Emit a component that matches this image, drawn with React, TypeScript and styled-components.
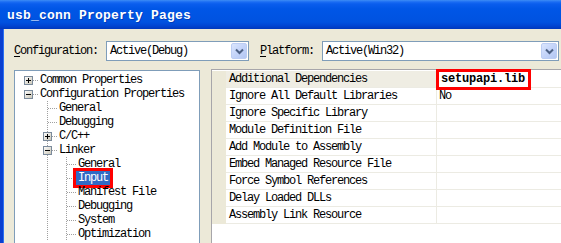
import { FC } from "react";
import styled, { createGlobalStyle } from "styled-components";

const GlobalStyle = createGlobalStyle`
  html, body {
    margin: 0;
    padding: 0;
    background: #ffffff;
  }

  body {
    font-family: "Liberation Mono", "Courier New", monospace;
  }
`;

const colors = {
  face: "#ECE9D8",
  inputBorder: "#7F9DB9",
  gridBorder: "#A7A6AA",
  gridLine: "#ECEBE3",
  selection: "#316AC5",
  mark: "#FF0000",
  dots: "#A0A0A0",
};

const textFont = `
  font-size: 12px;
  letter-spacing: -1.2px;
`;

const Window = styled.div`
  display: flex;
  flex-direction: column;
  width: 561px;
  height: 243px;
  overflow: hidden;
  background-color: ${colors.face};
`;

const TitleBar = styled.div`
  display: flex;
  align-items: center;
  flex-shrink: 0;
  height: 29px;
  padding: 1px 0 0 7px;
  box-sizing: border-box;
  background: linear-gradient(
    to bottom,
    #3d8df5 0px,
    #1a6cf3 2px,
    #0a5ded 4px,
    #0056e6 9px,
    #0054e3 16px,
    #0052e0 22px,
    #0048d6 25px,
    #003cc4 28px,
    #0038ba 29px
  );

  .title {
    color: #ffffff;
    font-weight: bold;
    font-size: 13px;
    letter-spacing: 0.2px;
    text-shadow: 1px 1px 0 rgba(0, 20, 110, 0.35);
  }
`;

const Body = styled.div`
  display: flex;
  flex-direction: column;
  flex: 1;
  gap: 8px;
  padding: 12px 0 0 11px;
  border-left: 3px solid #0a3fd0;
  box-shadow: inset 1px 0 0 #2b70f2;
`;

const ConfigRow = styled.div`
  display: flex;
  align-items: center;
  height: 20px;
`;

interface ILabel {
  $width: number;
  $gap?: number;
}

const FieldLabel = styled.label<ILabel>`
  width: ${(p) => p.$width}px;
  margin-left: ${(p) => p.$gap ?? 0}px;
  ${textFont}
  color: #000000;

  u {
    text-decoration: underline;
    text-underline-offset: 2px;
  }
`;

const Combo = styled.div<{ $width: number }>`
  display: flex;
  align-items: center;
  width: ${(p) => p.$width}px;
  height: 20px;
  box-sizing: border-box;
  border: 1px solid ${colors.inputBorder};
  background-color: #ffffff;

  .value {
    flex: 1;
    padding-left: 3px;
    ${textFont}
    color: #000000;
  }
`;

const ComboButton = styled.div`
  display: flex;
  align-items: center;
  justify-content: center;
  width: 16px;
  height: 16px;
  margin-right: 1px;
  box-sizing: border-box;
  border: 1px solid #bccdf3;
  border-radius: 2px;
  background: linear-gradient(135deg, #dbe6fd 0%, #c4d4f9 50%, #b3c7f3 100%);
`;

const Main = styled.div`
  display: flex;
  align-items: flex-start;
  gap: 11px;
`;

const TreePanel = styled.div`
  flex: none;
  width: 186px;
  height: 200px;
  margin-top: 1px;
  padding-top: 2px;
  box-sizing: border-box;
  border: 1px solid ${colors.inputBorder};
  background-color: #ffffff;
`;

const TreeRow = styled.div`
  display: flex;
  align-items: center;
  height: 14px;
  padding-left: 5px;
`;

const dotsV = (x: number) =>
  `repeating-linear-gradient(to bottom, ${colors.dots} 0 1px, transparent 1px 2px) ${x}px 0 / 1px 100% no-repeat`;
const dotsH = (x: number) =>
  `repeating-linear-gradient(to right, ${colors.dots} 0 1px, transparent 1px 2px) ${x}px 7px / calc(100% - ${x}px) 1px no-repeat`;

interface IGuide {
  $vline?: boolean;
  $hline?: boolean;
}

const Guide = styled.div<IGuide>`
  display: flex;
  align-items: center;
  flex: none;
  width: 19px;
  height: 14px;
  padding-left: 4px;
  box-sizing: border-box;
  background: ${(p) =>
    [p.$hline ? dotsH(9) : "", p.$vline ? dotsV(8) : ""]
      .filter(Boolean)
      .join(", ") || "none"};
`;

const TreeLabel = styled.span<{ $selected?: boolean }>`
  margin-left: -1px;
  padding: 0 2px;
  height: 14px;
  line-height: 14px;
  ${textFont}
  white-space: nowrap;
  color: ${(p) => (p.$selected ? "#ffffff" : "#000000")};
  background-color: ${(p) => (p.$selected ? colors.selection : "transparent")};
  outline: ${(p) => (p.$selected ? `3px solid ${colors.mark}` : "none")};
`;

const GridPanel = styled.div`
  flex: none;
  width: 360px;
  height: 200px;
  padding-top: 1px;
  box-sizing: border-box;
  border-top: 1px solid ${colors.gridBorder};
  border-left: 1px solid ${colors.gridBorder};
  background-color: #ffffff;
`;

const GridRow = styled.div<{ $selected?: boolean }>`
  display: grid;
  grid-template-columns: 14px 211px 1fr;
  height: 17px;
  ${textFont}
  color: #000000;

  .gutter {
    background-color: ${colors.face};
  }

  .name,
  .value {
    display: flex;
    align-items: center;
    border-bottom: 1px solid ${colors.gridLine};
    white-space: nowrap;
  }

  .name {
    padding-left: 3px;
    border-right: 1px solid ${colors.gridLine};
    background-color: ${(p) => (p.$selected ? "#EFEDE3" : "#ffffff")};
  }

  .value {
    padding-left: 2px;
  }
`;

const Marked = styled.span`
  position: relative;
  z-index: 1;
  padding: 1px 3px 1px 2px;
  line-height: 13px;
  font-size: 12px;
  font-weight: bold;
  letter-spacing: -0.2px;
  outline: 3px solid ${colors.mark};
  background-color: #ffffff;
`;

const Chevron: FC = () => (
  <svg width="9" height="7" viewBox="0 0 9 7">
    <path
      d="M1 1.5 L4.5 5 L8 1.5"
      fill="none"
      stroke="#4d6185"
      strokeWidth="2"
    />
  </svg>
);

const Expander: FC<{ open: boolean }> = ({ open }) => (
  <svg width="9" height="9" viewBox="0 0 9 9">
    <defs>
      <linearGradient id={open ? "exp-o" : "exp-c"} x1="0" y1="0" x2="1" y2="1">
        <stop offset="0" stopColor="#ffffff" />
        <stop offset="1" stopColor="#c8c4b4" />
      </linearGradient>
    </defs>
    <rect
      x="0.5"
      y="0.5"
      width="8"
      height="8"
      fill={`url(#${open ? "exp-o" : "exp-c"})`}
      stroke="#7b8b9c"
    />
    <path d="M2 4.5 H7" stroke="#000" />
    {!open && <path d="M4.5 2 V7" stroke="#000" />}
  </svg>
);

interface INode {
  level: number;
  label: string;
  box?: "open" | "closed";
  selected?: boolean;
}

const nodes: INode[] = [
  { level: 0, label: "Common Properties", box: "closed" },
  { level: 0, label: "Configuration Properties", box: "open" },
  { level: 1, label: "General" },
  { level: 1, label: "Debugging" },
  { level: 1, label: "C/C++", box: "closed" },
  { level: 1, label: "Linker", box: "open" },
  { level: 2, label: "General" },
  { level: 2, label: "Input", selected: true },
  { level: 2, label: "Manifest File" },
  { level: 2, label: "Debugging" },
  { level: 2, label: "System" },
  { level: 2, label: "Optimization" },
];

const properties = [
  "Additional Dependencies",
  "Ignore All Default Libraries",
  "Ignore Specific Library",
  "Module Definition File",
  "Add Module to Assembly",
  "Embed Managed Resource File",
  "Force Symbol References",
  "Delay Loaded DLLs",
  "Assembly Link Resource",
];

const TreeItem: FC<{ node: INode }> = ({ node }) => {
  const ancestors = Array.from({ length: node.level }, (_, i) => i);

  return (
    <TreeRow>
      {ancestors.map((depth) => (
        <Guide key={depth} $vline={depth > 0} />
      ))}
      <Guide $vline={node.level > 0} $hline>
        {node.box && <Expander open={node.box === "open"} />}
      </Guide>
      <TreeLabel $selected={node.selected}>{node.label}</TreeLabel>
    </TreeRow>
  );
};

const valueFor = (index: number) => {
  if (index === 0) return <Marked>setupapi.lib</Marked>;
  if (index === 1) return "No";
  return null;
};

const App: FC = () => (
  <>
    <GlobalStyle />
    <Window>
      <TitleBar>
        <span className="title">usb_conn Property Pages</span>
      </TitleBar>

      <Body>
        <ConfigRow>
          <FieldLabel $width={92}>
            <u>C</u>onfiguration:
          </FieldLabel>
          <Combo $width={143}>
            <span className="value">Active(Debug)</span>
            <ComboButton>
              <Chevron />
            </ComboButton>
          </Combo>
          <FieldLabel $width={62} $gap={11}>
            <u>P</u>latform:
          </FieldLabel>
          <Combo $width={237}>
            <span className="value">Active(Win32)</span>
            <ComboButton>
              <Chevron />
            </ComboButton>
          </Combo>
        </ConfigRow>

        <Main>
          <TreePanel>
            {nodes.map((node, i) => (
              <TreeItem key={i} node={node} />
            ))}
          </TreePanel>

          <GridPanel>
            {properties.map((name, i) => (
              <GridRow key={name} $selected={i === 0}>
                <div className="gutter" />
                <div className="name">{name}</div>
                <div className="value">{valueFor(i)}</div>
              </GridRow>
            ))}
          </GridPanel>
        </Main>
      </Body>
    </Window>
  </>
);

export default App;
